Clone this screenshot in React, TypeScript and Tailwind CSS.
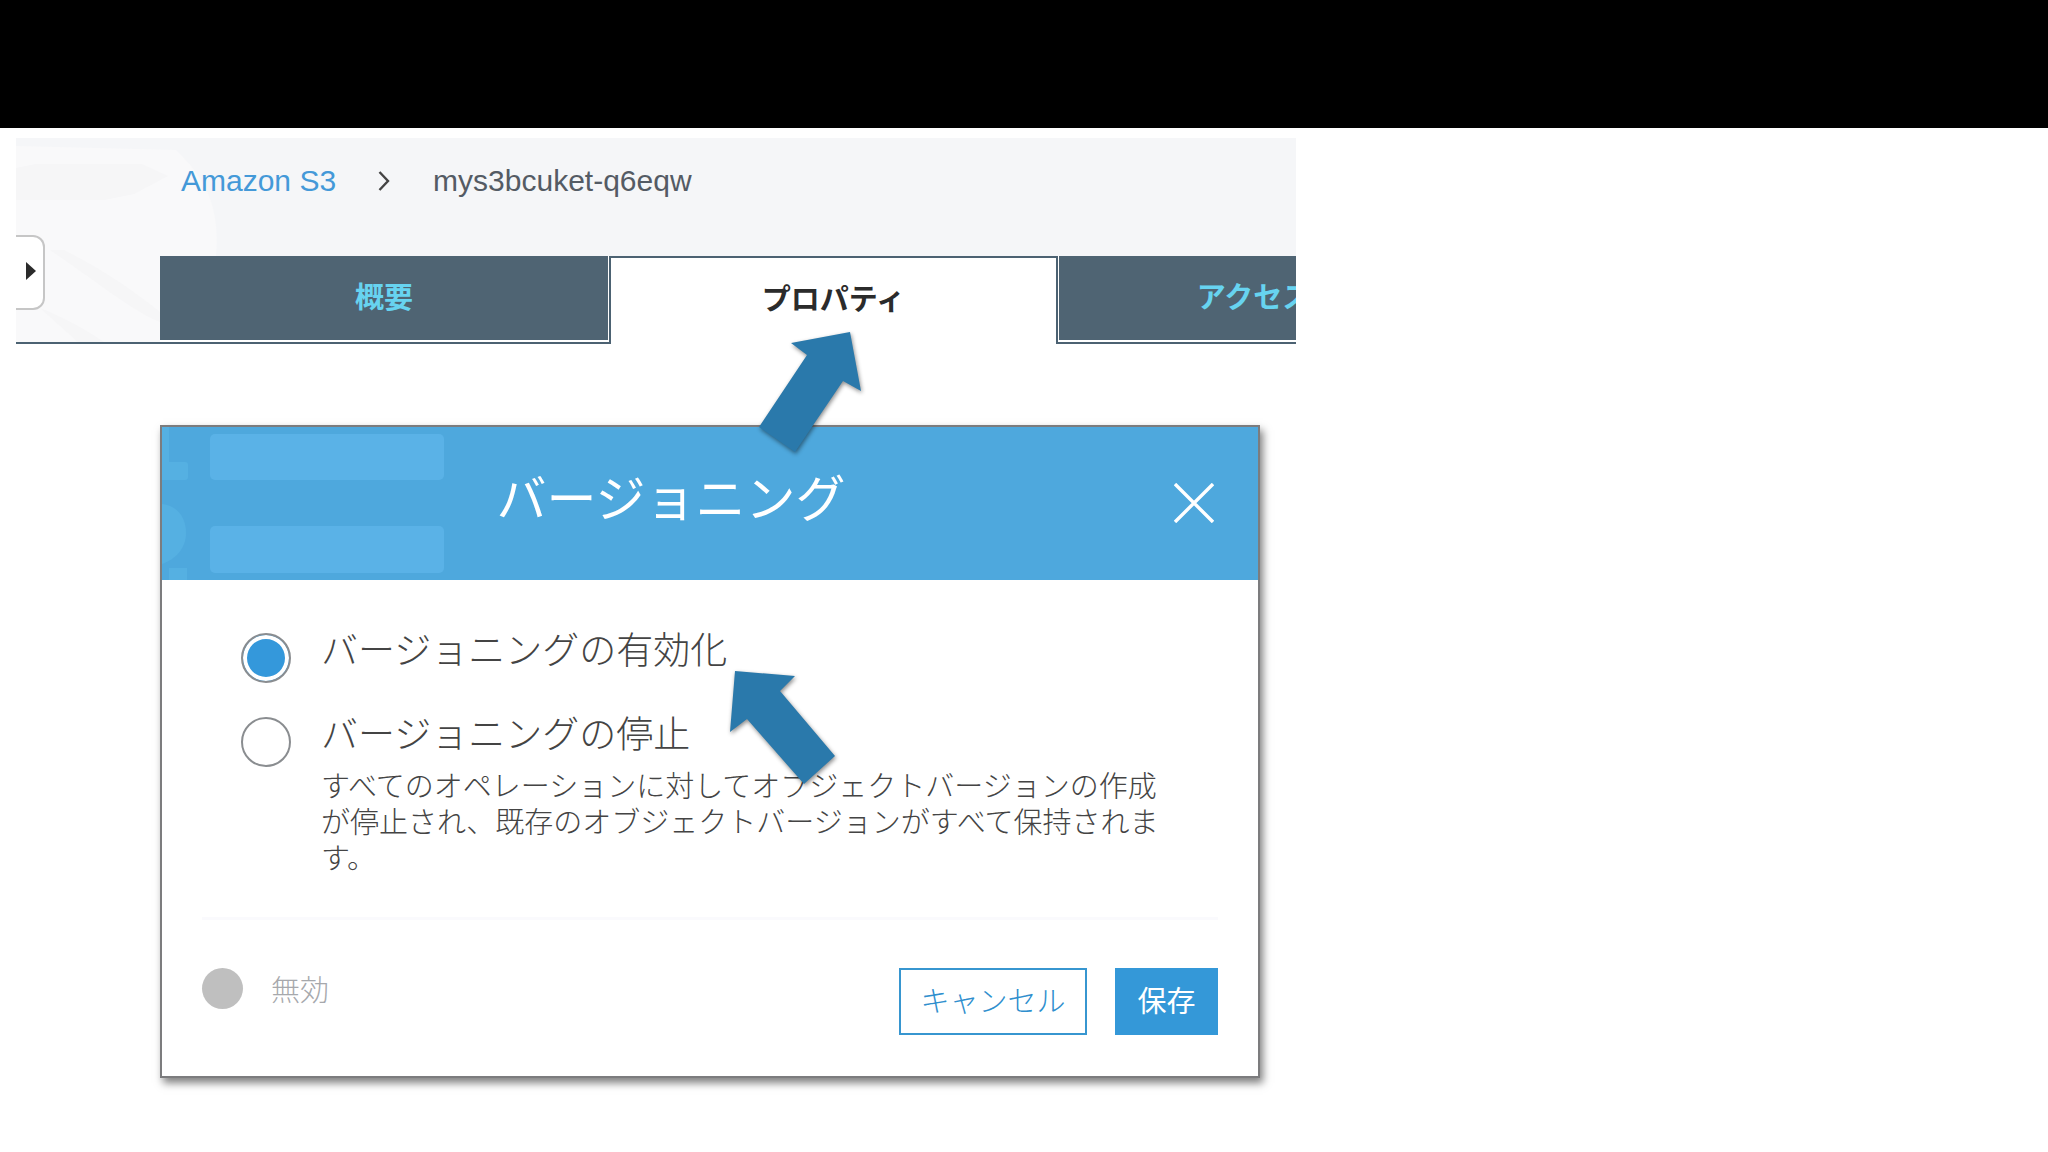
import { useState } from "react";

const tabs = [
  { id: "overview", label: "概要" },
  { id: "properties", label: "プロパティ" },
  { id: "access", label: "アクセス権限" },
];

function Breadcrumb() {
  return (
    <nav
      aria-label="breadcrumb"
      className="relative flex h-[118px] items-start pt-[25px] pl-[165px] text-[30px] leading-9"
    >
      <a href="#buckets" className="text-[#4499d8]">
        Amazon S3
      </a>
      <svg
        viewBox="0 0 12 20"
        fill="none"
        stroke="#444"
        strokeWidth="2.4"
        className="mt-2 ml-[42px] h-5 w-3"
      >
        <path d="M1.5 1 10 10 1.5 19" />
      </svg>
      <span className="ml-[43px] text-[#545b64]">mys3bcuket-q6eqw</span>
    </nav>
  );
}

function HeaderPattern() {
  return (
    <svg viewBox="0 0 260 204" className="absolute top-0 left-0 h-[204px] w-[260px]">
      <path d="M0 8 160 12c32 30 44 60 40 106h-56v86H0z" fill="#f9f9fa" />
      <path d="M0 30 20 26h106l26 12-34 18-30 6H0z" fill="#f6f6f7" />
      <path d="M34 112h14c36 18 66 38 96 62v10c-26-10-60-38-110-72z" fill="#f6f6f7" />
      <path d="M24 170c20 8 40 18 64 34H62z" fill="#f6f6f7" />
    </svg>
  );
}

function TabBar({ active, onChange }: { active: string; onChange: (id: string) => void }) {
  return (
    <div className="relative flex h-[88px]">
      <div className="w-36 shrink-0 border-b-2 border-[#4c6272]" />
      <div role="tablist" className="flex text-[29px] font-bold">
        {tabs.map((tab) =>
          tab.id === active ? (
            <button
              key={tab.id}
              role="tab"
              aria-selected="true"
              className="w-[449px] shrink-0 border-x-2 border-t-2 border-[#4c6272] bg-white text-[#2b2b2b]"
            >
              {tab.label}
            </button>
          ) : (
            <div
              key={tab.id}
              className="w-[450px] shrink-0 border-b-2 border-[#4c6272] bg-white px-px pb-0.5 first:w-[449px] first:pl-0"
            >
              <button
                role="tab"
                aria-selected="false"
                onClick={() => onChange(tab.id)}
                className="h-full w-full bg-[#4f6473] pt-0.5 text-[#67d3f0]"
              >
                {tab.label}
              </button>
            </div>
          )
        )}
      </div>
    </div>
  );
}

function ModalHeader() {
  return (
    <header className="relative flex h-[153px] items-center overflow-hidden bg-[#4ea8dd]">
      <svg viewBox="0 0 290 153" className="absolute top-0 left-0 h-[153px] w-[290px]">
        <path d="M0 0h7v35h16q3 0 3 3v12q0 3-3 3H0z" fill="#55b0e2" />
        <path d="M0 77c16 2 24 14 24 29S14 132 0 137z" fill="#55b0e2" />
        <path d="M7 141h18v12H7z" fill="#55b0e2" />
        <rect x="48" y="7" width="234" height="46" rx="5" fill="#5ab2e7" />
        <rect x="48" y="99" width="234" height="47" rx="5" fill="#5ab2e7" />
      </svg>
      <h2 className="relative w-full pr-[78px] pb-2 text-center text-[50px] leading-[60px] text-white">
        バージョニング
      </h2>
      <button aria-label="閉じる" className="absolute top-14 right-11 h-10 w-10">
        <svg viewBox="0 0 40 40" fill="none" stroke="#fff" strokeWidth="3.4">
          <path d="M1 1 39 39M39 1 1 39" />
        </svg>
      </button>
    </header>
  );
}

const radioClass =
  "mt-1.5 h-[50px] w-[50px] shrink-0 appearance-none rounded-full border-2 border-[#8a8d90] bg-white checked:bg-[#3498db] checked:shadow-[inset_0_0_0_4px_#fff]";

function VersioningModal() {
  const [value, setValue] = useState("enable");

  return (
    <section
      role="dialog"
      aria-label="バージョニング"
      className="mt-[81px] ml-36 max-w-[1100px] border-2 border-[#7c7c7e] bg-white shadow-[3px_5px_8px_rgba(0,0,0,0.5)]"
    >
      <ModalHeader />
      <div className="px-10 pt-[47px] pb-[41px]">
        <div className="flex items-start pl-[39px]">
          <input
            id="enable"
            type="radio"
            name="versioning"
            checked={value === "enable"}
            onChange={() => setValue("enable")}
            className={radioClass}
          />
          <label htmlFor="enable" className="ml-[30px] text-[37px] leading-[50px] font-light text-[#444]">
            バージョニングの有効化
          </label>
        </div>
        <div className="mt-7 flex items-start pl-[39px]">
          <input
            id="suspend"
            type="radio"
            name="versioning"
            checked={value === "suspend"}
            onChange={() => setValue("suspend")}
            className={radioClass}
          />
          <div className="ml-[30px] text-[#444]">
            <label htmlFor="suspend" className="block text-[37px] leading-[50px] font-light">
              バージョニングの停止
            </label>
            <p className="mt-2 max-w-[845px] text-[29px] leading-9 font-light">
              すべてのオペレーションに対してオブジェクトバージョンの作成が停止され、既存のオブジェクトバージョンがすべて保持されます。
            </p>
          </div>
        </div>
        <div className="mt-10 h-[3px] bg-[#fafafd]" />
        <footer className="mt-12 flex items-start text-[29px]">
          <span className="h-[41px] w-[41px] rounded-full bg-[#bfbfbf]" />
          <span className="ml-7 leading-[46px] font-light text-[#a6a8ac]">無効</span>
          <button className="ml-auto h-[67px] w-[188px] border-2 border-[#3796d0] pt-0.5 font-light text-[#2f8fce]">
            キャンセル
          </button>
          <button className="ml-7 h-[67px] w-[103px] bg-[#3498d8] pt-0.5 text-white">保存</button>
        </footer>
      </div>
    </section>
  );
}

function Arrows() {
  return (
    <svg
      viewBox="0 0 160 480"
      fill="#2a79ab"
      className="pointer-events-none absolute top-48 left-[714px] h-[480px] w-40 drop-shadow-[1px_2px_2px_rgba(0,0,0,0.45)]"
    >
      <path d="M136 12 77 23 93 35 45 107 81 132 129 61 147 71z" />
      <path d="M21 351 81 356 66 371 121 436 90 464 33 399 16 412z" />
    </svg>
  );
}

export default function App() {
  const [active, setActive] = useState("properties");

  return (
    <div
      lang="ja"
      className="min-h-screen bg-white pb-10 font-['Liberation_Sans','Noto_Sans_CJK_JP',sans-serif]"
    >
      <div className="h-32 bg-black" />
      <main className="relative pt-2.5 pl-4">
        <div className="max-w-[1280px]">
          <div className="relative overflow-hidden bg-[#f5f6f8]">
            <HeaderPattern />
            <Breadcrumb />
            <TabBar active={active} onChange={setActive} />
            <button
              aria-label="メニューを開く"
              className="absolute top-[97px] left-0 flex h-[75px] w-[29px] items-center justify-center rounded-r-xl border-2 border-l-0 border-[#c6c6c6] bg-white pb-1 pl-0.5"
            >
              <svg viewBox="0 0 10 18" fill="#2b2b2b" className="h-[18px] w-2.5">
                <path d="M0 0 10 9 0 18z" />
              </svg>
            </button>
          </div>
          <VersioningModal />
        </div>
        <Arrows />
      </main>
    </div>
  );
}
